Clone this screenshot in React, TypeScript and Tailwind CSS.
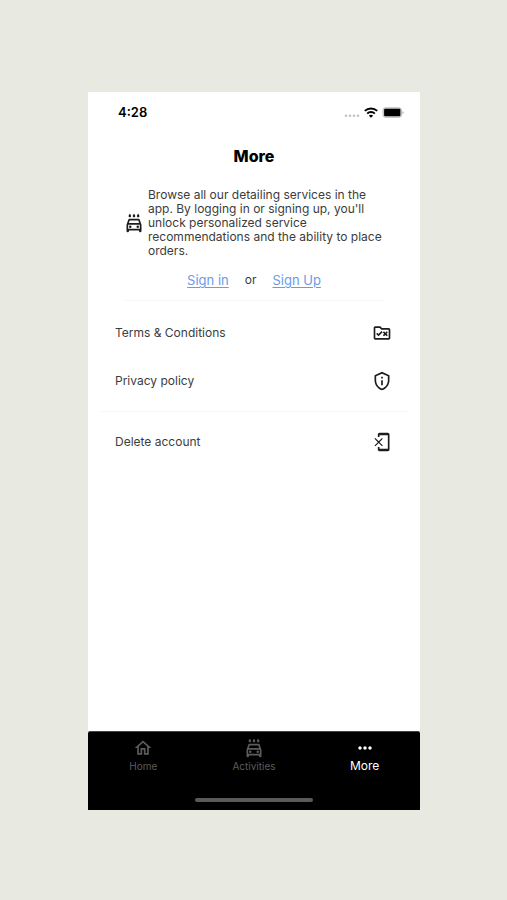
import React, { useState } from "react";
import {
  MdMoreHoriz,
  MdOutlineHome,
  MdOutlineLocalCarWash,
  MdOutlinePrivacyTip,
  MdOutlineRuleFolder,
  MdPhonelinkErase,
} from "react-icons/md";
import type { IconType } from "react-icons";

type MenuItem = {
  label: string;
  icon: IconType;
};

type Tab = {
  id: string;
  label: string;
  icon: IconType;
};

const legalItems: MenuItem[] = [
  { label: "Terms & Conditions", icon: MdOutlineRuleFolder },
  { label: "Privacy policy", icon: MdOutlinePrivacyTip },
];

const accountItems: MenuItem[] = [
  { label: "Delete account", icon: MdPhonelinkErase },
];

const tabs: Tab[] = [
  { id: "home", label: "Home", icon: MdOutlineHome },
  { id: "activities", label: "Activities", icon: MdOutlineLocalCarWash },
  { id: "more", label: "More", icon: MdMoreHoriz },
];

function StatusBar() {
  return (
    <div className="flex h-[42px] items-center justify-between pl-[30px] pr-4">
      <span className="text-[13px] font-semibold text-black">4:28</span>
      <div className="flex items-center gap-1">
        <svg className="h-4 w-4" viewBox="0 0 16 16" fill="#c4c4c4" aria-hidden="true">
          <circle cx="2" cy="10.8" r="1.3" />
          <circle cx="6" cy="10.8" r="1.3" />
          <circle cx="10" cy="10.8" r="1.3" />
          <circle cx="14" cy="10.8" r="1.3" />
        </svg>
        <svg className="h-3 w-[14px]" viewBox="0 0 14 12" fill="none" stroke="#000" strokeWidth="2" aria-hidden="true">
          <path d="M.8 3.9a8.9 8.9 0 0 1 12.4 0" />
          <path d="M3.2 6.6a5.4 5.4 0 0 1 7.6 0" />
          <path d="M7 10.8 4.9 8.7a3 3 0 0 1 4.2 0Z" fill="#000" stroke="none" />
        </svg>
        <svg className="h-3 w-[22px]" viewBox="0 0 22 12" aria-hidden="true">
          <rect x="1" y=".8" width="18.5" height="9.5" rx="2.4" fill="#d8d8d8" stroke="#bdbdbd" />
          <rect x="2.1" y="1.8" width="16.3" height="7.5" rx="1" fill="#000" />
          <path d="M20.4 3.9v3.4a1.8 1.8 0 0 0 0-3.4Z" fill="#b5b5b5" />
        </svg>
      </div>
    </div>
  );
}

function MenuRow({ label, icon: Icon }: MenuItem) {
  return (
    <li>
      <button className="flex h-12 w-full items-center justify-between pl-[27px] pr-7 text-left text-xs text-[#3c3c3c]">
        {label}
        <Icon className="size-5 text-[#1c1c1c]" />
      </button>
    </li>
  );
}

export default function App() {
  const [activeTab, setActiveTab] = useState("more");

  return (
    <div className="flex min-h-screen flex-col bg-[#e8e9e0] pt-[92px] pr-[87px] pb-[90px] pl-[88px] font-['Inter',sans-serif]">
      <div className="flex flex-1 flex-col bg-white">
        <StatusBar />

        <main className="flex-1">
          <h1 className="pt-2.5 text-center text-base leading-6 font-extrabold text-black">More</h1>

          <section className="px-9 pt-5">
            <div className="flex items-center gap-1">
              <MdOutlineLocalCarWash className="size-5 shrink-0 text-[#1c1c1c]" />
              <p className="text-xs leading-[14px] text-[#3c3c3c]">
                Browse all our detailing services in the app. By logging in or signing up, you'll
                unlock personalized service recommendations and the ability to place orders.
              </p>
            </div>
            <div className="flex justify-center gap-4 pt-3 pb-2.5 text-[13px] leading-5 text-[#3c3c3c]">
              <a href="#sign-in" className="text-[#6b9be8] underline underline-offset-2">Sign in</a>
              <span className="text-xs leading-5">or</span>
              <a href="#sign-up" className="text-[#6b9be8] underline underline-offset-2">Sign Up</a>
            </div>
          </section>

          <hr className="mx-9 border-[#f7f7f7]" />
          <ul className="pt-2 pb-1.5">
            {legalItems.map((item) => (
              <MenuRow key={item.label} {...item} />
            ))}
          </ul>
          <hr className="mx-3 border-[#f7f7f7]" />
          <ul className="pt-1.5">
            {accountItems.map((item) => (
              <MenuRow key={item.label} {...item} />
            ))}
          </ul>
        </main>

        <nav className="rounded-t-xs border-t border-[#3a4a42] bg-black pb-2">
          <div className="grid grid-cols-3 pt-1.5">
            {tabs.map(({ id, label, icon: Icon }) => (
              <button
                key={id}
                onClick={() => setActiveTab(id)}
                className={
                  activeTab === id
                    ? "flex flex-col items-center text-xs leading-4 text-white"
                    : "flex flex-col items-center text-[10px] leading-4 text-[#5c5c5c]"
                }
              >
                <Icon className="size-5" />
                {label}
              </button>
            ))}
          </div>
          <div className="mx-auto mt-6 h-1 w-[118px] rounded-full bg-[#5a5a5a]" />
        </nav>
      </div>
    </div>
  );
}
